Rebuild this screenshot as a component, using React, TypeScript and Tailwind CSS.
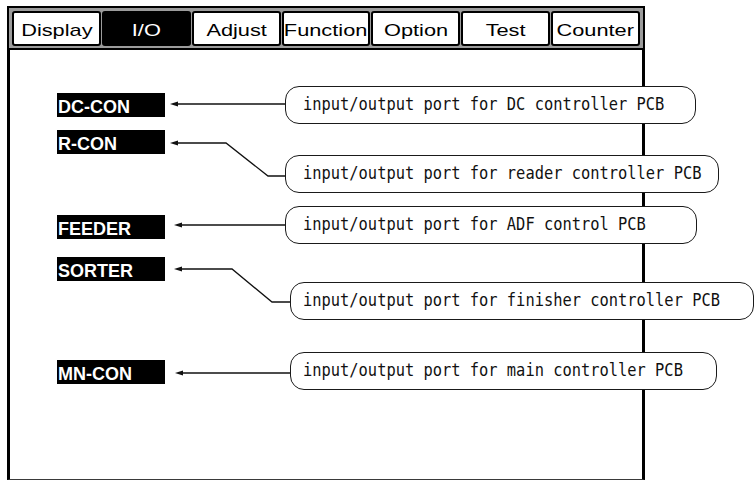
const TABS = ["Display", "I/O", "Adjust", "Function", "Option", "Test", "Counter"];
const ACTIVE_TAB = "I/O";

type Port = {
  label: string;
  labelClass: string;
  text: string;
  bubbleClass: string;
  path: string;
  tip: [number, number];
};

const PORTS: Port[] = [
  {
    label: "DC-CON",
    labelClass: "top-[93px]",
    text: "input/output port for DC controller PCB",
    bubbleClass: "left-[285px] top-[86px] w-[411px] pl-[17px]",
    path: "M176 104 L286 104",
    tip: [170, 104],
  },
  {
    label: "R-CON",
    labelClass: "top-[130px]",
    text: "input/output port for reader controller PCB",
    bubbleClass: "left-[285px] top-[155px] w-[434px] pl-[17px]",
    path: "M176 143 L226 143 L268 176 L286 176",
    tip: [170, 143],
  },
  {
    label: "FEEDER",
    labelClass: "top-[215px]",
    text: "input/output port for ADF control PCB",
    bubbleClass: "left-[285px] top-[206px] w-[412px] pl-[17px]",
    path: "M180 225 L286 225",
    tip: [174, 225],
  },
  {
    label: "SORTER",
    labelClass: "top-[257px]",
    text: "input/output port for finisher controller PCB",
    bubbleClass: "left-[290px] top-[282px] w-[464px] pl-[12px]",
    path: "M180 269 L232 269 L272 302 L291 302",
    tip: [174, 269],
  },
  {
    label: "MN-CON",
    labelClass: "top-[360px]",
    text: "input/output port for main controller PCB",
    bubbleClass: "left-[290px] top-[352px] w-[427px] pl-[12px]",
    path: "M181 373 L291 373",
    tip: [175, 373],
  },
];

function Tab({ name }: { name: string }) {
  const active = name === ACTIVE_TAB;
  return (
    <div
      className={`flex-1 h-[35px] flex items-center justify-center pt-[3px] border-2 border-black rounded-[3px] ${
        active ? "bg-black text-white" : "bg-white text-black"
      }`}
    >
      <span className="inline-block scale-x-[1.28] text-[17px] leading-none font-['Liberation_Sans',Arial,sans-serif]">
        {name}
      </span>
    </div>
  );
}

export default function App() {
  return (
    <div className="relative w-[755px] h-[480px] bg-white overflow-hidden">
      <div className="ml-[7px] pt-[6px] w-[638px]">
        <div className="flex gap-px border-2 border-black bg-[#9c9c9c] px-[3px] pt-[3px] pb-[2px]">
          {TABS.map((t) => (
            <Tab key={t} name={t} />
          ))}
        </div>
        <div className="h-[430px] border-l-[3px] border-r-[3px] border-b border-black border-b-[#3a3a3a]" />
      </div>

      <svg className="absolute inset-0 w-[755px] h-[480px] pointer-events-none" viewBox="0 0 755 480">
        {PORTS.map((p) => (
          <g key={p.label}>
            <path d={p.path} fill="none" stroke="#111" strokeWidth={1.3} />
            <polygon
              points={`${p.tip[0]},${p.tip[1]} ${p.tip[0] + 8},${p.tip[1] - 2.5} ${p.tip[0] + 8},${p.tip[1] + 2.5}`}
              fill="#111"
            />
          </g>
        ))}
      </svg>

      {PORTS.map((p) => (
        <div
          key={p.label}
          className={`absolute left-[57px] w-[108px] h-[24px] pt-[5px] pl-px bg-black text-white text-[18px] leading-none font-bold font-['Liberation_Sans',Arial,sans-serif] ${p.labelClass}`}
        >
          {p.label}
        </div>
      ))}

      {PORTS.map((p) => (
        <div
          key={p.text}
          className={`absolute h-[38px] flex items-center rounded-[14px] border-[1.5px] border-[#1a1a1a] bg-white whitespace-nowrap ${p.bubbleClass}`}
        >
          <span className="inline-block scale-y-[1.2] text-[15.4px] leading-none text-[#111] font-['DejaVu_Sans_Mono','Liberation_Mono',monospace]">
            {p.text}
          </span>
        </div>
      ))}
    </div>
  );
}
